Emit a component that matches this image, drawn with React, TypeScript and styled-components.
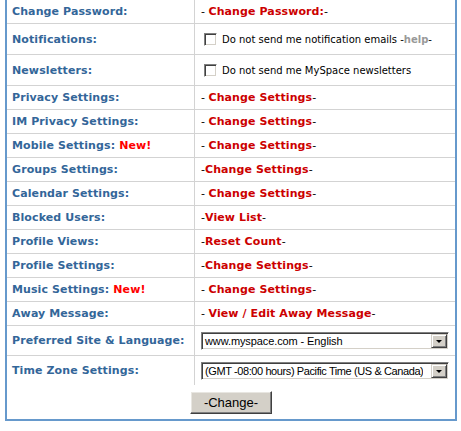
import React from 'react';
import styled, { createGlobalStyle } from 'styled-components';

const GlobalStyle = createGlobalStyle`
  body {
    margin: 0;
    background: #ffffff;
    font-family: 'DejaVu Sans', Verdana, sans-serif;
  }
`;

const Page = styled.div`
  padding: 0 5px;
  margin-top: -2px;
`;

const Box = styled.div`
  width: 448px;
  border: 2px solid #6699cc;
`;

const Row = styled.div<{ $h: number; $last?: boolean }>`
  display: grid;
  grid-template-columns: 187px 260px;
  column-gap: 1px;
  background: #d3d3d3;
  height: ${(p) => p.$h}px;
  border-bottom: ${(p) => (p.$last ? 'none' : '1px solid #d3d3d3')};
`;

const Label = styled.div`
  background: #ffffff;
  display: flex;
  align-items: center;
  padding-left: 5px;
  font-size: 11px;
  font-weight: bold;
  letter-spacing: 0.1px;
  color: #336699;
  white-space: nowrap;
`;

const Value = styled.div`
  background: #ffffff;
  display: flex;
  align-items: center;
  padding-left: 6px;
  font-size: 11px;
  color: #000000;
  white-space: pre;
`;

const New = styled.span`
  color: #ff0000;
  margin-left: 4px;
`;

const Link = styled.span`
  color: #cc0000;
  font-weight: bold;
  letter-spacing: 0.1px;
`;

const Check = styled.span`
  display: inline-block;
  width: 13px;
  height: 13px;
  box-sizing: border-box;
  margin: 0 5px 0 3px;
  background: #ffffff;
  border-top: 1px solid #808080;
  border-left: 1px solid #808080;
  border-right: 1px solid #ffffff;
  border-bottom: 1px solid #ffffff;
  box-shadow: inset 1px 1px 0 #404040, inset -1px -1px 0 #d4d0c8;
`;

const Small = styled.span`
  font-size: 10px;
  color: #000000;
`;

const Help = styled.span`
  color: #999999;
  font-weight: bold;
`;

const Select = styled.div<{ $tight?: boolean }>`
  display: flex;
  align-items: center;
  justify-content: space-between;
  width: 248px;
  height: 18px;
  box-sizing: border-box;
  background: #ffffff;
  border-top: 1px solid #808080;
  border-left: 1px solid #808080;
  border-right: 1px solid #ffffff;
  border-bottom: 1px solid #ffffff;
  box-shadow: inset 1px 1px 0 #404040, inset -1px -1px 0 #d4d0c8;
  padding: 1px;
  font-family: 'Liberation Sans', Arial, sans-serif;
  font-size: 11px;
  letter-spacing: ${(p) => (p.$tight ? '-0.4px' : '-0.1px')};
  color: #000000;
`;

const SelectText = styled.span`
  padding-left: 2px;
  white-space: nowrap;
  overflow: hidden;
`;

const Arrow = styled.span`
  flex: none;
  width: 16px;
  height: 14px;
  box-sizing: border-box;
  display: flex;
  align-items: center;
  justify-content: center;
  background: #d4d0c8;
  border-top: 1px solid #d4d0c8;
  border-left: 1px solid #d4d0c8;
  border-right: 1px solid #404040;
  border-bottom: 1px solid #404040;
  box-shadow: inset 1px 1px 0 #ffffff, inset -1px -1px 0 #808080;

  &::after {
    content: '';
    border-left: 3px solid transparent;
    border-right: 3px solid transparent;
    border-top: 3px solid #000000;
    margin-top: 1px;
  }
`;

const Footer = styled.div`
  height: 34px;
  display: flex;
  align-items: center;
  justify-content: center;
`;

const Button = styled.button`
  width: 82px;
  height: 23px;
  background: #d4d0c8;
  border-top: 1px solid #ffffff;
  border-left: 1px solid #ffffff;
  border-right: 1px solid #404040;
  border-bottom: 1px solid #404040;
  box-shadow: inset -1px -1px 0 #808080, inset 1px 1px 0 #e8e6e1;
  font-family: 'Liberation Sans', Arial, sans-serif;
  font-size: 13px;
  color: #000000;
  padding: 0;
  margin-top: 1px;
`;

type Item = {
  label: string;
  isNew?: boolean;
  link: string;
  gap?: boolean;
};

const links: Item[] = [
  { label: 'Privacy Settings:', link: 'Change Settings', gap: true },
  { label: 'IM Privacy Settings:', link: 'Change Settings', gap: true },
  { label: 'Mobile Settings:', isNew: true, link: 'Change Settings', gap: true },
  { label: 'Groups Settings:', link: 'Change Settings' },
  { label: 'Calendar Settings:', link: 'Change Settings', gap: true },
  { label: 'Blocked Users:', link: 'View List' },
  { label: 'Profile Views:', link: 'Reset Count' },
  { label: 'Profile Settings:', link: 'Change Settings' },
  { label: 'Music Settings:', isNew: true, link: 'Change Settings', gap: true },
  { label: 'Away Message:', link: 'View / Edit Away Message', gap: true },
];

const App = () => {
  return (
    <Page>
      <GlobalStyle />
      <Box>
        <Row $h={23}>
          <Label>Change Password:</Label>
          <Value>
            {'- '}
            <Link>Change Password:</Link>-
          </Value>
        </Row>
        <Row $h={30}>
          <Label>Notifications:</Label>
          <Value>
            <Check />
            <Small>
              Do not send me notification emails -<Help>help</Help>-
            </Small>
          </Value>
        </Row>
        <Row $h={30}>
          <Label>Newsletters:</Label>
          <Value>
            <Check />
            <Small>Do not send me MySpace newsletters</Small>
          </Value>
        </Row>
        {links.map((item) => (
          <Row $h={23} key={item.label}>
            <Label>
              {item.label}
              {item.isNew && <New>New!</New>}
            </Label>
            <Value>
              {item.gap ? '- ' : '-'}
              <Link>{item.link}</Link>-
            </Value>
          </Row>
        ))}
        <Row $h={29}>
          <Label>Preferred Site &amp; Language:</Label>
          <Value>
            <Select>
              <SelectText>www.myspace.com - English</SelectText>
              <Arrow />
            </Select>
          </Value>
        </Row>
        <Row $h={29} $last>
          <Label>Time Zone Settings:</Label>
          <Value>
            <Select $tight>
              <SelectText>(GMT -08:00 hours) Pacific Time (US &amp; Canada)</SelectText>
              <Arrow />
            </Select>
          </Value>
        </Row>
        <Footer>
          <Button>-Change-</Button>
        </Footer>
      </Box>
    </Page>
  );
};

export default App;
